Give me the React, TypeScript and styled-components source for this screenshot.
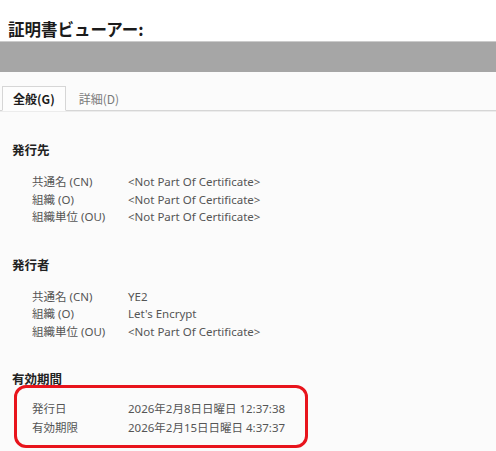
import React from "react";
import styled, { createGlobalStyle } from "styled-components";

const GlobalStyle = createGlobalStyle`
  html, body {
    margin: 0;
    padding: 0;
    background: #fbfbfb;
  }
  body {
    font-family: "Segoe UI", "Noto Sans", "Noto Sans CJK JP", sans-serif;
  }
`;

const Viewer = styled.div`
  width: 496px;
  height: 451px;
  overflow: hidden;
  background: #fbfbfb;
`;

const Title = styled.h1`
  margin: 0;
  padding: 19px 8px 2px;
  height: 20px;
  line-height: 20px;
  font-size: 16.5px;
  font-weight: 700;
  color: #1b1b1b;
  background: #ffffff;
  font-family: "Noto Sans CJK JP", sans-serif;
`;

const GrayBar = styled.div`
  height: 30px;
  border-top: 1px solid #cbcbcb;
  background: #a6a6a6;
`;

const TabStrip = styled.div`
  display: flex;
  align-items: flex-end;
  height: 38px;
  padding-left: 2px;
  border-bottom: 1px solid #d6d6d6;
  box-shadow: 0 1px 0 #ececec;
`;

const Tab = styled.div<{ $active?: boolean }>`
  height: 25px;
  box-sizing: border-box;
  display: flex;
  align-items: center;
  white-space: nowrap;
  padding: 0 ${(p) => (p.$active ? "10px" : "12px")};
  margin-bottom: -1px;
  font-size: 12px;
  font-family: "Noto Sans CJK JP", sans-serif;
  font-weight: ${(p) => (p.$active ? 700 : 400)};
  color: ${(p) => (p.$active ? "#1b1b1b" : "#7a7a7a")};
  background: ${(p) => (p.$active ? "#fdfdfd" : "transparent")};
  border: 1px solid ${(p) => (p.$active ? "#d6d6d6" : "transparent")};
  border-bottom: 1px solid ${(p) => (p.$active ? "#fdfdfd" : "transparent")};
`;

const Content = styled.div`
  padding: 30px 12px 0;
`;

const Section = styled.section`
  & + & {
    margin-top: 30px;
  }
`;

const Heading = styled.h2`
  margin: 0;
  font-size: 12.5px;
  line-height: 17px;
  font-weight: 700;
  color: #222222;
  font-family: "Noto Sans CJK JP", sans-serif;
`;

const Rows = styled.div<{ $boxed?: boolean }>`
  display: grid;
  grid-template-columns: 96px 1fr;
  margin-top: ${(p) => (p.$boxed ? "-2px" : "15px")};
  margin-left: ${(p) => (p.$boxed ? "2px" : "20px")};
  width: ${(p) => (p.$boxed ? "294px" : "auto")};
  box-sizing: border-box;
  padding: ${(p) => (p.$boxed ? "12px 0 9px 15px" : "0")};
  border: ${(p) => (p.$boxed ? "3px solid #e8141c" : "none")};
  border-radius: ${(p) => (p.$boxed ? "12px" : "0")};
  row-gap: ${(p) => (p.$boxed ? "1px" : "0")};
`;

const Cell = styled.div`
  font-size: 11.5px;
  line-height: 17.5px;
  color: #555555;
  white-space: nowrap;
`;

type Row = [string, string];

const NOT_PART = "<Not Part Of Certificate>";

const subject: Row[] = [
  ["共通名 (CN)", NOT_PART],
  ["組織 (O)", NOT_PART],
  ["組織単位 (OU)", NOT_PART],
];

const issuer: Row[] = [
  ["共通名 (CN)", "YE2"],
  ["組織 (O)", "Let's Encrypt"],
  ["組織単位 (OU)", NOT_PART],
];

const validity: Row[] = [
  ["発行日", "2026年2月8日日曜日 12:37:38"],
  ["有効期限", "2026年2月15日日曜日 4:37:37"],
];

const RowList = ({ rows, boxed }: { rows: Row[]; boxed?: boolean }) => (
  <Rows $boxed={boxed}>
    {rows.map(([label, value]) => (
      <React.Fragment key={label}>
        <Cell>{label}</Cell>
        <Cell>{value}</Cell>
      </React.Fragment>
    ))}
  </Rows>
);

const App = () => {
  return (
    <Viewer>
      <GlobalStyle />
      <Title>証明書ビューアー:</Title>
      <GrayBar />
      <TabStrip>
        <Tab $active>全般(G)</Tab>
        <Tab>詳細(D)</Tab>
      </TabStrip>
      <Content>
        <Section>
          <Heading>発行先</Heading>
          <RowList rows={subject} />
        </Section>
        <Section>
          <Heading>発行者</Heading>
          <RowList rows={issuer} />
        </Section>
        <Section>
          <Heading>有効期間</Heading>
          <RowList rows={validity} boxed />
        </Section>
      </Content>
    </Viewer>
  );
};

export default App;
